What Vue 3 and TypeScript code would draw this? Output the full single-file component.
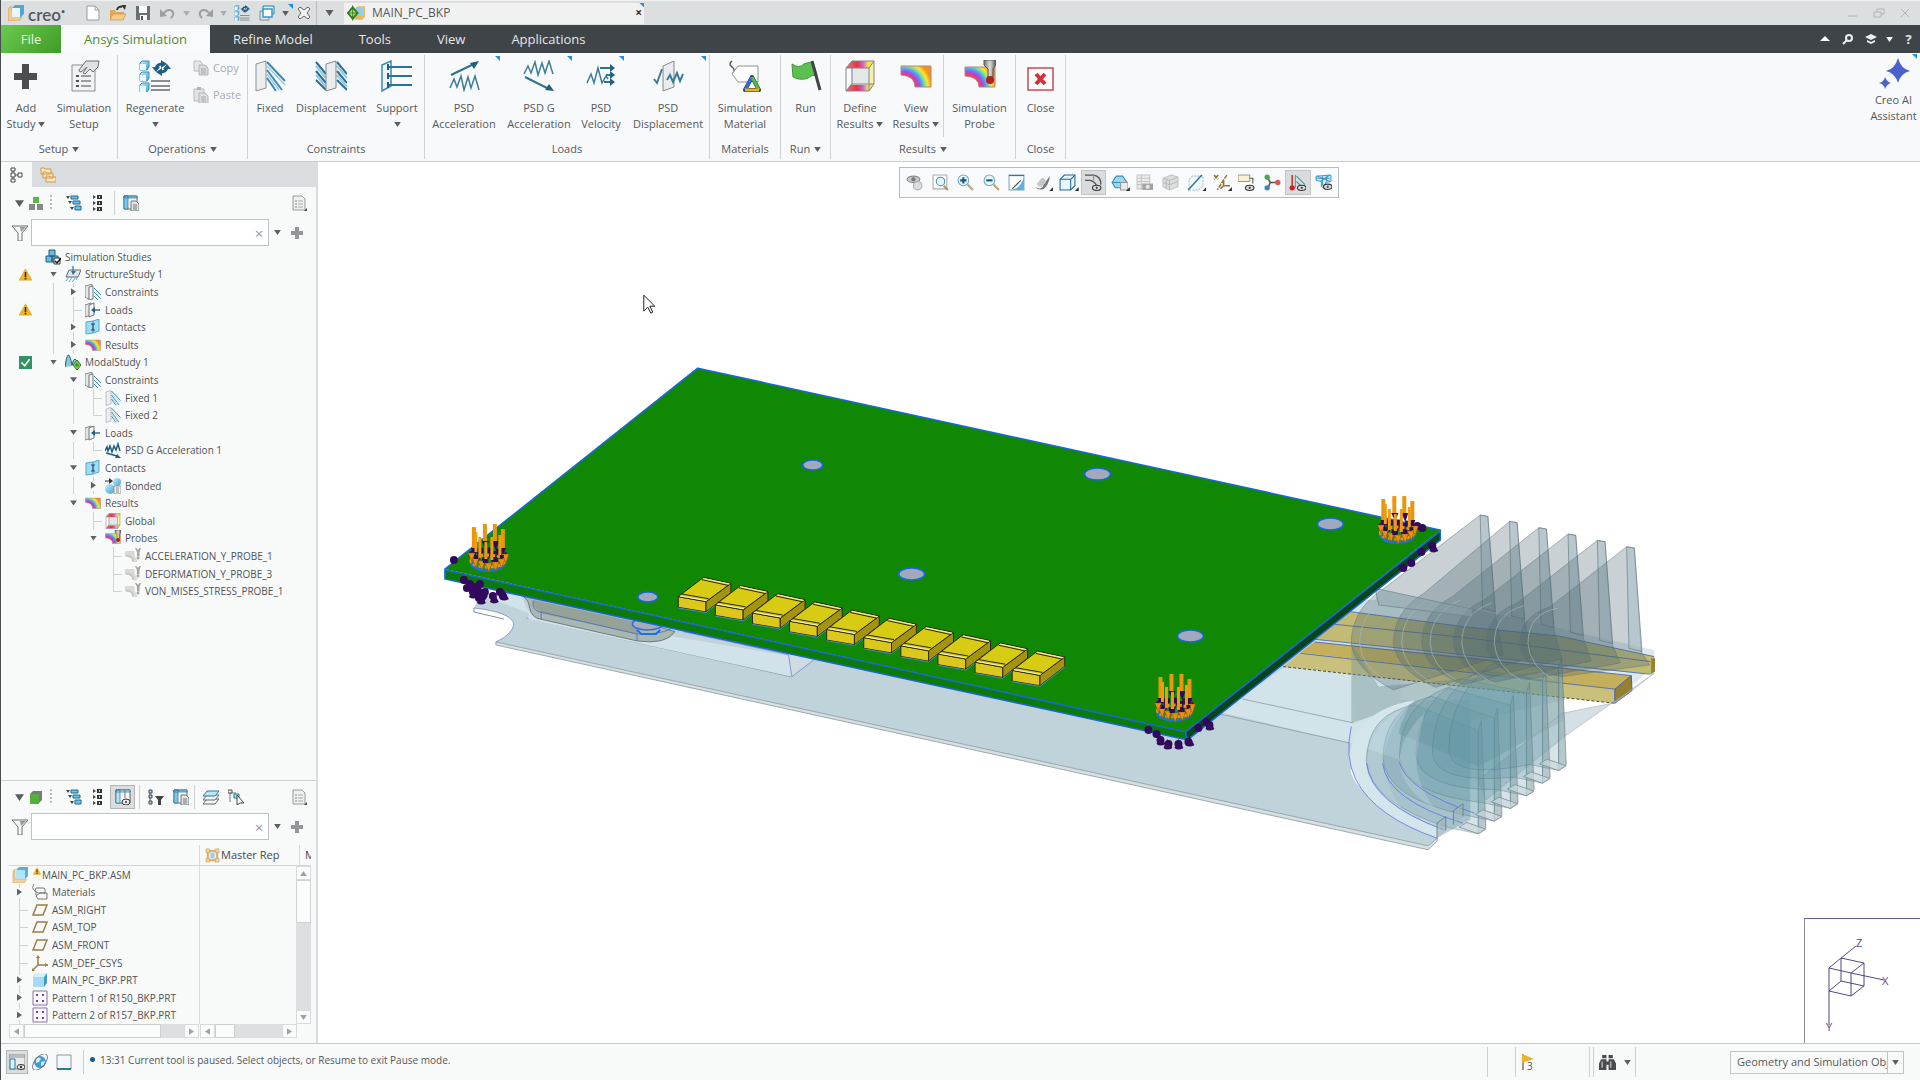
<script setup lang="ts">
import { ref } from 'vue'

interface RibbonItem {
  icon: string
  lines: string[]
  width: number
  caret?: boolean
  corner?: boolean
  divider?: boolean
}
interface RibbonGroup {
  label: string
  caret?: boolean
  items: RibbonItem[]
  clipboard?: boolean
}
interface TreeRow {
  label: string
  icon: string
  guides: string
  status?: string
}

const tabs = ['Refine Model', 'Tools', 'View', 'Applications']

const groups: RibbonGroup[] = [
  {
    label: 'Setup', caret: true,
    items: [
      { icon: 'plus', lines: ['Add', 'Study'], width: 50, caret: true },
      { icon: 'setup', lines: ['Simulation', 'Setup'], width: 66 },
    ],
  },
  {
    label: 'Operations', caret: true, clipboard: true,
    items: [{ icon: 'regen', lines: ['Regenerate', ''], width: 74, caret: true }],
  },
  {
    label: 'Constraints',
    items: [
      { icon: 'fixed', lines: ['Fixed'], width: 44 },
      { icon: 'disp', lines: ['Displacement'], width: 78 },
      { icon: 'support', lines: ['Support', ''], width: 54, caret: true },
    ],
  },
  {
    label: 'Loads',
    items: [
      { icon: 'psda', lines: ['PSD', 'Acceleration'], width: 78, corner: true },
      { icon: 'psdg', lines: ['PSD G', 'Acceleration'], width: 72, corner: true },
      { icon: 'psdv', lines: ['PSD', 'Velocity'], width: 52, corner: true },
      { icon: 'psdd', lines: ['PSD', 'Displacement'], width: 82, corner: true },
    ],
  },
  { label: 'Materials', items: [{ icon: 'material', lines: ['Simulation', 'Material'], width: 70 }] },
  { label: 'Run', caret: true, items: [{ icon: 'run', lines: ['Run'], width: 49 }] },
  {
    label: 'Results', caret: true,
    items: [
      { icon: 'define', lines: ['Define', 'Results'], width: 58, caret: true },
      { icon: 'view', lines: ['View', 'Results'], width: 54, caret: true },
      { icon: 'probe', lines: ['Simulation', 'Probe'], width: 72, divider: true },
    ],
  },
  { label: 'Close', items: [{ icon: 'close', lines: ['Close'], width: 49 }] },
]

// Guide characters, one per level: | line, T tee, L corner, v expanded, > collapsed
const studies: TreeRow[] = [
  { label: 'Simulation Studies', icon: 'studies', guides: '' },
  { label: 'StructureStudy 1', icon: 'structure', guides: 'v', status: 'warn' },
  { label: 'Constraints', icon: 'constraints', guides: '|>' },
  { label: 'Loads', icon: 'loads', guides: '|T', status: 'warn' },
  { label: 'Contacts', icon: 'contacts', guides: '|>' },
  { label: 'Results', icon: 'view', guides: '|>' },
  { label: 'ModalStudy 1', icon: 'modal', guides: 'v', status: 'ok' },
  { label: 'Constraints', icon: 'constraints', guides: ' v' },
  { label: 'Fixed 1', icon: 'fixed', guides: ' |T' },
  { label: 'Fixed 2', icon: 'fixed', guides: ' |L' },
  { label: 'Loads', icon: 'loads', guides: ' v' },
  { label: 'PSD G Acceleration 1', icon: 'psdg', guides: ' |L' },
  { label: 'Contacts', icon: 'contacts', guides: ' v' },
  { label: 'Bonded', icon: 'bonded', guides: ' |>' },
  { label: 'Results', icon: 'view', guides: ' v' },
  { label: 'Global', icon: 'define', guides: '  T' },
  { label: 'Probes', icon: 'probe', guides: '  v' },
  { label: 'ACCELERATION_Y_PROBE_1', icon: 'probe-off', guides: '   T' },
  { label: 'DEFORMATION_Y_PROBE_3', icon: 'probe-off', guides: '   T' },
  { label: 'VON_MISES_STRESS_PROBE_1', icon: 'probe-off', guides: '   L' },
]

const parts: TreeRow[] = [
  { label: 'MAIN_PC_BKP.ASM', icon: 'asm', guides: '', status: 'warn' },
  { label: 'Materials', icon: 'tags', guides: '>' },
  { label: 'ASM_RIGHT', icon: 'plane', guides: 'T' },
  { label: 'ASM_TOP', icon: 'plane', guides: 'T' },
  { label: 'ASM_FRONT', icon: 'plane', guides: 'T' },
  { label: 'ASM_DEF_CSYS', icon: 'csys', guides: 'T' },
  { label: 'MAIN_PC_BKP.PRT', icon: 'part', guides: '>' },
  { label: 'Pattern 1 of R150_BKP.PRT', icon: 'pattern', guides: '>' },
  { label: 'Pattern 2 of R157_BKP.PRT', icon: 'pattern', guides: '>' },
]

const guideClass: Record<string, string> = {
  '|': 'line', T: 'tee', L: 'elbow', v: 'open', '>': 'shut', ' ': 'none',
}

const viewTools = [
  { icon: 'v-pause', name: 'Resume display' },
  { icon: 'v-refit', name: 'Refit' },
  { icon: 'v-zoomin', name: 'Zoom in' },
  { icon: 'v-zoomout', name: 'Zoom out' },
  { icon: 'v-repaint', name: 'Repaint' },
  { icon: 'v-render', name: 'Rendering', more: true },
  { icon: 'v-style', name: 'Display style', more: true },
  { icon: 'v-edges', name: 'Edges', on: true },
  { icon: 'v-saved', name: 'Saved orientations', more: true },
  { icon: 'v-manager', name: 'View manager' },
  { icon: 'v-persp', name: 'Perspective' },
  { icon: 'v-section', name: 'Sections', more: true },
  { icon: 'v-datum', name: 'Datum display', more: true },
  { icon: 'v-notes', name: 'Annotation display' },
  { icon: 'v-spin', name: 'Spin center' },
  { icon: 'v-sim', name: 'Simulation display', on: true },
  { icon: 'v-mesh', name: 'Mesh display' },
]

const studyFilter = ref('')
const partFilter = ref('')
const selection = ref('Geometry and Simulation Objects')

const chips = Array.from({ length: 10 }, (_, i) => `translate(${i * 88.2} ${i * 24.6})`)
const holes = [
  [812, 465, 10, 5], [1097, 474, 13, 6], [911, 574, 13, 6],
  [647, 597, 10, 5], [1330, 524, 13, 6], [1190, 636, 13, 6],
]
const loads = [[487, 570], [1397, 542], [1174, 720]]
const backBars = [[-14, -43, -21], [-3, -46, -28], [7, -46, -28], [15, -41, -20]]
const frontBars = [[-12, -38, -18], [-8, -33, -12], [-2, -28, -8], [4, -33, -10], [12, -35, -12]]
const cones = [[-17, -9], [-13, -4], [-7, -1], [0, 1], [7, 0], [13, -3], [17, -8]]
const backCones = [[-14, -18], [-9, -15], [-3, -25], [0, -16], [7, -25], [6, -15], [14, -18], [11, -14]]
const anchors = [
  [463, 580], [469, 584], [479, 584], [466, 588], [472, 592], [484, 592], [478, 598], [492, 596], [502, 596], [499, 592],
  [1148, 730], [1156, 734], [1160, 740], [1168, 744], [1178, 744], [1188, 742], [1198, 728], [1206, 722], [1209, 725],
  [1432, 546], [1421, 552], [1411, 563], [1403, 568], [1417, 526], [1422, 528],
]
const bottomCones = [[472, 597], [480, 603], [493, 602], [503, 599], [1160, 744], [1167, 748], [1178, 748], [1189, 745], [1209, 729], [1433, 551]]

const apexes = [708, 818, 892, 975, 1060, 1148]
const upperFins = apexes.map((a, k) => {
  const x = 1045 + k * 76.6
  const y = 105 + k * 19
  const floor = 395 + k * 24
  return {
    face: `M${x} ${y} L${a + 80} ${330 + k * 10} Q${a} ${390 + k * 4} ${a} 490 Q${a + 8} 570 ${a + 110} ${630 - k * 8} L${x + 60} ${floor + 130 - k * 18} L${x + 38} ${floor} L${x + 20} ${y + 4} Z`,
    edge: `M${x} ${y} l20 4 l20 ${floor - y - 4} l-34 -10 Z`,
    rim: `M${a + 22} 490 Q${a + 22} 400 ${a + 100} ${345 + k * 8} M${a + 22} 490 Q${a + 26} 560 ${a + 90} 600`,
  }
})
const lowerFins = Array.from({ length: 6 }, (_, k) => {
  const x = 1040 + k * 42
  const y = 1062 - k * 38
  const a = 748 + k * 43
  return {
    face: `M${x} ${752 - k * 38} L${x - 165} ${675 - k * 26} Q${a} ${700 - k * 12} ${a} ${845 - k * 6} Q${a + 10} ${970 - k * 14} ${x - 75} ${y - 18} L${x} ${y} Z`,
    edge: `M${x} ${y} V${752 - k * 38} l8 -30 l12 ${322} Z`,
    foot: `M${x} ${y} l20 -14 l-50 -20 l-20 14 Z`,
  }
})
</script>

<template>
  <svg class="sprite" aria-hidden="true">
    <defs>
      <linearGradient id="g-rain"><stop offset="0" stop-color="#3a6ee8" /><stop offset=".2" stop-color="#e0409a" /><stop offset=".45" stop-color="#a83af0" /><stop offset=".6" stop-color="#30b4f0" /><stop offset=".8" stop-color="#f0e820" /><stop offset="1" stop-color="#f08020" /></linearGradient>
      <linearGradient id="g-hot"><stop offset="0" stop-color="#f46a80" /><stop offset=".4" stop-color="#e8343c" /><stop offset=".6" stop-color="#d060c8" /><stop offset=".8" stop-color="#f0e850" /><stop offset="1" stop-color="#f4e020" /></linearGradient>
      <radialGradient id="g-arc" gradientUnits="userSpaceOnUse" cx="3" cy="28" r="29"><stop offset=".34" stop-color="#f45a60" /><stop offset=".46" stop-color="#f03a7a" /><stop offset=".56" stop-color="#a84ae0" /><stop offset=".66" stop-color="#50a0f4" /><stop offset=".76" stop-color="#80e0a0" /><stop offset=".86" stop-color="#f8e820" /><stop offset="1" stop-color="#f49020" /></radialGradient>
      <linearGradient id="g-blue" x2="1" y2="1"><stop offset="0" stop-color="#c8ecfb" /><stop offset="1" stop-color="#3ba4d4" /></linearGradient>
      <linearGradient id="g-steel" x2="1"><stop offset="0" stop-color="#777" /><stop offset=".5" stop-color="#ddd" /><stop offset="1" stop-color="#555" /></linearGradient>
    </defs>

    <symbol id="caret" viewBox="0 0 8 6"><path d="M0 0h8L4 6z" fill="currentColor" /></symbol>
    <symbol id="plus" viewBox="0 0 32 32"><path d="M12 4h7v9h8v7h-8v9h-7v-9H4v-7h8z" fill="#4c4e50" /></symbol>
    <symbol id="setup" viewBox="0 0 32 32"><path d="M4 5h23v26H4z" fill="#f1f2f2" stroke="#8b8f91" /><path d="M11 10L18 1l13 0-1 6-5 5-3-3-5 5-2-1 4-6-6 5-2-1z" fill="#dfe1e2" stroke="#6c7072" /><path d="M8 16h3M8 21h3M8 26h3" stroke="#555" stroke-width="2" /><path d="M13 16h10M13 21h10M13 26h10" stroke="#9a9ea0" stroke-width="2" /></symbol>
    <symbol id="regen" viewBox="0 0 32 32"><g fill="url(#g-blue)" stroke="#3c8fb4"><path d="M1 3l2-2h7v6l-2 3H1z" /><path d="M1 14l2-2h7v6l-2 3H1z" /><path d="M1 25l2-2h7v6l-2 3H1z" /></g><path d="M1 4h6v6H1zM1 15h6v6H1zM1 26h6v6H1z" fill="#eaf7fc" /><path d="M17 9q1-5 6-5M28 7q-1 5-6 5" fill="none" stroke="#1f5f85" stroke-width="3" /><path d="M22 0l6 4-6 4zM23 8v8l-6-4zM13 7h8l-4 5zM24 9h8l-4-5z" fill="#1f5f85" /><path d="M12 21h19M12 26h19M12 30h19" stroke="#8a8e90" stroke-width="2" /></symbol>
    <symbol id="fixed" viewBox="0 0 32 32"><path d="M2 4l10-3v27l-10 3z" fill="#eceeef" stroke="#8b9194" /><path d="M13 2l18 19M13 10l15 20M13 18l9 13" stroke="#3d89b3" stroke-width="2" /><path d="M13 6l18 19M13 14l12 16" stroke="#93cbe4" stroke-width="1.500" /></symbol>
    <symbol id="disp" viewBox="0 0 32 32"><path d="M1 2l10 12M1 11l10 12M1 20l10 10M22 2l10 12M22 11l10 12M22 20l10 10" stroke="#2d6e93" stroke-width="2" /><path d="M1 6l10 12M1 15l10 12M22 6l10 12M22 15l10 12" stroke="#8ec9e4" stroke-width="2" /><path d="M11 4l10-3v27l-10 3z" fill="#e9ebec" stroke="#85898c" /></symbol>
    <symbol id="support" viewBox="0 0 32 32"><path d="M1 5l9-4v25l-9 5z" fill="#edf4f8" stroke="#3a8ab2" stroke-width="1.500" /><path d="M8 7h23M8 16h23M8 25h23" stroke="#2a7099" stroke-width="2" /><path d="M7 4v6M7 13v6M7 22v6" stroke="#1f5f85" stroke-width="2" /></symbol>
    <symbol id="psda" viewBox="0 0 32 32"><path d="M3 15L28 3" stroke="#2f7391" stroke-width="2" /><path d="M31 1l-9 2 4 6z" fill="#245f7e" /><path d="M2 28l4-9 3 8 4-11 3 14 4-13 3 11 4-12 4 14" fill="none" stroke="#3b7d99" stroke-width="1.500" /></symbol>
    <symbol id="psdg" viewBox="0 0 32 32"><path d="M1 14l4-8 3 7 4-11 3 13 4-12 3 10 4-12 4 13" fill="none" stroke="#3b7d99" stroke-width="1.500" /><path d="M2 17l24 12" stroke="#2f7391" stroke-width="2" /><path d="M31 31l-9-1 4-6z" fill="#245f7e" /></symbol>
    <symbol id="psdg-s" viewBox="0 0 16 16"><path d="M0 9l2-4 1 4 2-5 2 6 2-6 2 4 2-6 2 7" fill="none" stroke="#1f5f80" stroke-width="1.500" /><path d="M1 11l11 3" stroke="#1f5f80" stroke-width="1.500" /><path d="M16 16l-6 0 2-4z" fill="#1f5f80" /></symbol>
    <symbol id="psdv" viewBox="0 0 32 32"><path d="M2 23l4-9 3 9 4-15 4 15 4-7 2 3" fill="none" stroke="#3b7d99" stroke-width="1.500" /><path d="M15 8h12M21 15h6M19 22h8" stroke="#2f7391" stroke-width="2" /><path d="M25 4l5 4-5 4zM25 11l5 4-5 4zM25 18l5 4-5 4z" fill="#245f7e" /></symbol>
    <symbol id="psdd" viewBox="0 0 32 32"><path d="M11 6l11-5v26l-11 4z" fill="#e9ebec" stroke="#85898c" /><path d="M2 19l3 4 5-14M15 20l3-5 3 7 4-9 3 8 3-7" fill="none" stroke="#3b7d99" stroke-width="2" /></symbol>
    <symbol id="material" viewBox="0 0 32 32"><path d="M3 1q-4 3 0 6t1 6" fill="none" stroke="#555" stroke-width="1.500" /><path d="M9 6h20v16H9l-6-8z" fill="#fff" stroke="#8b8f91" /><path d="M23 17l7 13H16z" fill="#fff" stroke="#333" stroke-width="4" stroke-linejoin="round" /><path d="M23 17l-7 13" stroke="#2f6fe0" stroke-width="3" /><path d="M23 17l7 13" stroke="#4cc040" stroke-width="3" /><path d="M16 30h14" stroke="#e8b020" stroke-width="3" /></symbol>
    <symbol id="run" viewBox="0 0 32 32"><path d="M2 4q7 5 12 0 5-2 9-2l4 13q-6 0-9 3-7 3-15-1z" fill="#5cc050" stroke="#3a9a34" /><path d="M22 1l8 29" stroke="#444" stroke-width="3" /></symbol>
    <symbol id="define" viewBox="0 0 32 32"><path d="M2 8L8 1h22l-5 7zM2 31l5-7h23l-5 7z" fill="url(#g-hot)" /><path d="M7 8h18v17H7z" fill="#e4e7e8" /><path d="M25 8l5-7v23l-5 7z" fill="#f0e860" opacity=".5" /><path d="M2 8h23v23H2zM2 8L8 1h22l-5 7M30 1v23l-5 7M8 1v23h22M2 31l6-7" fill="none" stroke="#8a8288" /></symbol>
    <symbol id="view" viewBox="0 0 32 32"><path d="M1 6h30v21H15q0-11-14-12z" fill="url(#g-arc)" stroke="#b08878" /></symbol>
    <symbol id="probe" viewBox="0 0 32 32"><path d="M1 7h30v20H15q0-10-14-11z" fill="url(#g-arc)" stroke="#b08878" /><path d="M20 0h12v5l-3 4v8h-5V9l-4-4z" fill="url(#g-steel)" stroke="#555" /><circle cx="26" cy="20" r="4" fill="#b02020" /></symbol>
    <symbol id="probe-off" viewBox="0 0 32 32"><path d="M1 7h17v8l6 12H15q0-10-14-11z" fill="#dcdad6" stroke="#ccc9c5" /><path d="M16 27q1-11-14-12" fill="none" stroke="#c6c3bf" stroke-width="3" /><path d="M20 0h3l3 4 3-4h3l-3 8v9h-5V8z" fill="#a4a5a3" /><circle cx="26" cy="20" r="3" fill="#aaa8a4" /></symbol>
    <symbol id="close" viewBox="0 0 32 32"><path d="M3 8h25v22H3z" fill="#fff" stroke="#d0474c" stroke-width="1.500" /><path d="M11 14l9 10M20 14l-9 10" stroke="#d13438" stroke-width="4" /></symbol>
    <symbol id="spark" viewBox="0 0 32 32"><path d="M20 1q3 11 12 13-9 2-12 12-3-10-12-12Q17 12 20 1zM7 20q2 5 6 6-4 1-6 6-1-5-6-6 5-1 6-6z" fill="#4b62cc" /></symbol>
    <symbol id="copy" viewBox="0 0 16 16"><path d="M1 1h6l2 2v8H1z" fill="#e6e7e7" stroke="#b8babb" /><path d="M6 5h6l3 3v7H6z" fill="#d9dada" stroke="#b3b5b6" /><path d="M8 9h5M8 11h5M8 13h5" stroke="#aaa" /></symbol>
    <symbol id="paste" viewBox="0 0 16 16"><path d="M1 2h10v12H1z" fill="#e2e3e3" stroke="#b8babb" /><path d="M4 0h4v3H4z" fill="#b3b5b6" /><path d="M6 6h6l3 3v7H6z" fill="#dedfdf" stroke="#b3b5b6" /><path d="M8 10h5M8 12h5M8 14h5" stroke="#aaa" /></symbol>

    <symbol id="logo" viewBox="0 0 16 16"><path d="M0 4l3-3 2 10 9 1-3 4H0z" fill="#f0c98c" stroke="#c99a58" stroke-width=".600" /><path d="M4 3l3-3h9v9l-3 3H4z" fill="#4ea9d2" /><path d="M4 3h8v9H4z" fill="#eaf6fc" /></symbol>
    <symbol id="newdoc" viewBox="0 0 16 16"><path d="M2 1h8l4 4v10H2z" fill="#fff" stroke="#9a9d9f" /><path d="M10 1v4h4" fill="none" stroke="#9a9d9f" /></symbol>
    <symbol id="open" viewBox="0 0 16 16"><path d="M0 5h5l1 2h8v8H0z" fill="#e2a75b" /><path d="M3 9h13l-3 6H0z" fill="#f4cc8c" stroke="#c98a3e" stroke-width=".600" /><path d="M7 5q1-4 5-3" fill="none" stroke="#333" stroke-width="2" /><path d="M11 0h5l-1 5z" fill="#333" /></symbol>
    <symbol id="save" viewBox="0 0 16 16"><path d="M1 1h14v14H1z" fill="#6b6f73" /><path d="M4 1h8v7H4zM5 10h7v5H5z" fill="#fff" /><path d="M6 11h2v4H6z" fill="#555" /></symbol>
    <symbol id="undo" viewBox="0 0 16 16"><path d="M3 9q5-6 9-3 3 3-1 7" fill="none" stroke="#9c9fa1" stroke-width="2" /><path d="M0 4v8l7-1z" fill="#9c9fa1" /></symbol>
    <symbol id="windows" viewBox="0 0 16 16"><path d="M4 1h11v8H4z" fill="#e8f4fa" stroke="#2d7ca4" /><path d="M1 6h9v9H1z" fill="#dfe3e4" stroke="#888" /><path d="M4 4h9v8H4z" fill="#fff" stroke="#2d9ad0" stroke-width="1.500" /></symbol>
    <symbol id="xbox" viewBox="0 0 16 16"><path d="M2 4l2-2 4 3 4-3 2 2-3 4 3 4-2 2-4-3-4 3-2-2 3-4z" fill="#f2f2f2" stroke="#666" /></symbol>
    <symbol id="assembly" viewBox="0 0 20 16"><path d="M8 4l3-3h8v11l-3 3H8z" fill="#e8b860" /><path d="M10 2h8v9h-8z" fill="#8fd0ee" /><path d="M6 2l5 6-5 6-5-6z" fill="#b8ec88" stroke="#2f7d1c" stroke-width="2" /><path d="M6 0v16M0 8h12" stroke="#2f7d1c" /></symbol>

    <symbol id="studies" viewBox="0 0 16 16"><g fill="#66bce0" stroke="#235f7e" stroke-width="1"><path d="M4 1h6v6H4zM1 7h6v6H1zM7 7h6v6H7z" /></g><path d="M9 9h6v6H9z" fill="#fff" stroke="#333" /><path d="M10 12l2 2 4-5" fill="none" stroke="#111" stroke-width="1.500" /></symbol>
    <symbol id="structure" viewBox="0 0 16 16"><path d="M4 4h12l-3 7H1z" fill="#e3e6e8" stroke="#666" /><path d="M8 0v6" stroke="#3b8fbb" stroke-width="1.500" /><path d="M6 5h5L8 9z" fill="#2c739b" /><path d="M4 11l-3 4M7 11l-3 5M11 11l-4 5M14 9l-3 5" stroke="#58a6cc" /></symbol>
    <symbol id="constraints" viewBox="0 0 16 16"><path d="M0 2l7-2v13l-4 2-3-2z" fill="#e4e6e7" stroke="#888" /><path d="M4 3l4-1v13l-4 1z" fill="#f2f3f3" stroke="#777" /><path d="M9 4l7 7M9 8l7 7M9 12l4 4" stroke="#3d89b3" /></symbol>
    <symbol id="loads" viewBox="0 0 16 16"><path d="M0 3l6-2v12l-6 2z" fill="#e4e6e7" stroke="#888" /><path d="M4 3l5-2v12l-5 2z" fill="#f2f3f3" stroke="#777" /><path d="M8 8h7" stroke="#2f7391" stroke-width="1.500" /><path d="M6 8l4-3v6z" fill="#245f7e" /></symbol>
    <symbol id="contacts" viewBox="0 0 16 16"><path d="M1 3l7-1v12l-7 1zM8 2l6-2v12l-6 2z" fill="#9fdcf4" stroke="#5aa8cc" /><path d="M6 5h4M6 11h4M8 5v6" stroke="#1f4f6f" /></symbol>
    <symbol id="modal" viewBox="0 0 16 16"><path d="M0 13Q3-10 7 11 8 5 10 5q2 1 3 6" fill="#8cc4de" stroke="#245f7e" /><path d="M12 6l4 5-4 5-4-5z" fill="#7fd04c" stroke="#2f7d1c" /><path d="M12 9v4M10 11h4" stroke="#2f7d1c" /></symbol>
    <symbol id="bonded" viewBox="0 0 16 16"><circle cx="12" cy="4" r="4" fill="url(#g-blue)" /><circle cx="5" cy="11" r="5" fill="url(#g-blue)" /><path d="M0 3h5" stroke="#333" /><path d="M4 0l4 3-4 3z" fill="#333" /><path d="M9 8h7v8H9z" fill="#f3f3f3" stroke="#999" /><path d="M11 10h3M11 12h3M11 14h3" stroke="#888" /></symbol>
    <symbol id="warn" viewBox="0 0 16 16"><path d="M8 1l8 14H0z" fill="#f0b62a" stroke="#c99420" stroke-width=".500" /><path d="M7 5h2v6H7zM7 12h2v2H7z" fill="#3a2c08" /></symbol>
    <symbol id="ok" viewBox="0 0 16 16"><path d="M0 0h16v16H0z" fill="#2f9461" /><path d="M3 8l4 4 6-8" fill="none" stroke="#fff" stroke-width="2" /></symbol>
    <symbol id="asm" viewBox="0 0 16 16"><path d="M1 4l2-2v10h11v1l-2 3H1z" fill="#f2d19c" stroke="#caa060" stroke-width=".600" /><path d="M4 3l3-3h9v9l-3 3H4z" fill="#4fb0dc" /><path d="M4 3h9v9H4z" fill="#b4e2f6" /></symbol>
    <symbol id="tags" viewBox="0 0 16 16"><path d="M2 0Q-1 4 2 6t2 5" fill="none" stroke="#777" /><path d="M4 4h8l1 1v4H6L3 7zM8 9h7v6H6l-2-3z" fill="#fafafa" stroke="#777" /></symbol>
    <symbol id="plane" viewBox="0 0 16 16"><path d="M5 3h10l-4 10H1z" fill="none" stroke="#9a7e45" stroke-width="1.500" /></symbol>
    <symbol id="csys" viewBox="0 0 16 16"><path d="M6 1v9l-5 5M6 10h10" fill="none" stroke="#9a7e45" stroke-width="1.500" /><path d="M4 3l2-3 2 3zM0 13v3h3zM13 8l3 2-3 2z" fill="#9a7e45" /></symbol>
    <symbol id="part" viewBox="0 0 16 16"><path d="M1 5l3-4h11v10l-3 4H1z" fill="#3f9cc8" /><path d="M1 5h11v10H1z" fill="#a5daf2" /><path d="M1 5l3-4h11l-3 4z" fill="#d6f1fc" /></symbol>
    <symbol id="pattern" viewBox="0 0 16 16"><path d="M1 1h14v14H1z" fill="#fdfbff" stroke="#8a70a8" /><path d="M4 4h2v2H4zM10 4h2v2h-2zM4 10h2v2H4zM10 10h2v2h-2z" fill="#6b4a96" /></symbol>

    <symbol id="modeltree" viewBox="0 0 16 16"><path d="M4 3v10M4 8h6" stroke="#555" /><path d="M2 1h4v3H2zM2 6h4v4H2zM2 12h4v3H2zM9 6h4v4H9z" fill="#fff" stroke="#444" /></symbol>
    <symbol id="folders" viewBox="0 0 16 16"><g fill="#fbe6bf" stroke="#cf9a4c"><path d="M1 1h3l1 1h6v5H1zM3 5h3l1 1h6v5H3zM6 9h3l1 1h6v5H6z" /></g></symbol>
    <symbol id="blocks" viewBox="0 0 16 16"><path d="M5 2h6v6H5z" fill="#5cb544" /><path d="M1 9h6v6H1zM9 9h6v6H9z" fill="#85898b" /></symbol>
    <symbol id="cube" viewBox="0 0 16 16"><path d="M2 5l3-3h9v9l-3 3z" fill="#777b7d" /><path d="M2 5h9v10H2z" fill="#55ae3e" /></symbol>
    <symbol id="expand" viewBox="0 0 16 16"><g fill="#6cc3e8" stroke="#20688c"><path d="M5 1h7v3H5zM7 6h7v3H7zM9 11h6v4H9z" /></g><path d="M0 1h4L2 4zM2 6h4L4 9zM4 12h4l-2 3z" fill="#444" /></symbol>
    <symbol id="collapse" viewBox="0 0 16 16"><path d="M7 0h5v4H7zM7 6h5v4H7zM7 12h5v4H7z" fill="#333" /><path d="M9 1h1v2H9zM9 7h1v2H9zM9 13h1v2H9z" fill="#ddd" /><path d="M3 0l3 2-3 2zM3 6l3 2-3 2zM3 12l3 2-3 2z" fill="#444" /></symbol>
    <symbol id="columns" viewBox="0 0 16 16"><path d="M1 1h13v13H1z" fill="#f4f6f7" stroke="#666" /><path d="M1 1h4v13H1zM1 1h13v2H1z" fill="#7cc6e8" stroke="#2b7196" stroke-width=".700" /><path d="M8 6h5l3 3v7H8z" fill="#e2e3e4" stroke="#777" /><path d="M10 10h4M10 12h4M10 14h4" stroke="#777" /></symbol>
    <symbol id="eyecols" viewBox="0 0 16 16"><path d="M1 1h14v13H1z" fill="#fafafa" stroke="#666" /><path d="M1 1h4v13H1zM1 1h14v2H1z" fill="#b8e2f4" stroke="#2b7196" stroke-width=".700" /><path d="M10 1v8" stroke="#777" /><ellipse cx="11" cy="13" rx="4" ry="3" fill="#eee" stroke="#333" /><circle cx="11" cy="13" r="1" fill="#333" /></symbol>
    <symbol id="navigator" viewBox="0 0 16 16"><path d="M0 1h16v14H0z" fill="#e9eaea" stroke="#8a8d8f" /><path d="M0 3h16" stroke="#8a8d8f" /><path d="M1 5h5v10H1z" fill="#d8f0fa" stroke="#2b7a9e" /><ellipse cx="12" cy="13" rx="4" ry="2.500" fill="#eee" stroke="#333" /><circle cx="12" cy="13" r="1.200" fill="#333" /></symbol>
    <symbol id="treefilter" viewBox="0 0 16 16"><path d="M2 2v12" stroke="#555" /><path d="M1 1h3v3H1zM1 6h3v3H1zM1 12h3v3H1z" fill="#a8dcf2" stroke="#444" /><path d="M7 7h9l-3 4v5h-3v-5z" fill="#444" /></symbol>
    <symbol id="layers" viewBox="0 0 16 16"><g fill="#f3f5f6" stroke="#666"><path d="M4 10h12l-4 5H0z" /><path d="M4 6h12l-4 5H0z" /><path d="M4 2h12l-4 5H0z" fill="#bfe6f7" stroke="#2b7a9e" /></g></symbol>
    <symbol id="pick" viewBox="0 0 16 16"><path d="M2 3v10M2 4h6" stroke="#777" /><path d="M0 1h4v3H0z" fill="#eee" stroke="#555" /><path d="M6 5h5v4H6z" fill="#a8dcf2" stroke="#2b7a9e" /><path d="M9 6l7 8-4 0-3 2z" fill="#fff" stroke="#444" /></symbol>
    <symbol id="doclist" viewBox="0 0 16 16"><path d="M2 1h9l3 3v11H2z" fill="#eeefef" stroke="#999" /><path d="M4 6h2M4 9h2M4 12h2" stroke="#888" /><path d="M7 6h5M7 9h5M7 12h5" stroke="#aaa" /><path d="M16 13v3h-3z" fill="#444" /></symbol>
    <symbol id="funnel" viewBox="0 0 16 16"><path d="M0 1h16l-6 7v8H6V8z" fill="#f6f6f6" stroke="#6d7072" /><path d="M8 2h6l-5 5z" fill="#999" /></symbol>
    <symbol id="add" viewBox="0 0 16 16"><path d="M6 2h4v4h4v4h-4v4H6v-4H2V6h4z" fill="#939799" /></symbol>
    <symbol id="rep" viewBox="0 0 16 16"><path d="M3 3h10v10H3z" fill="#dff0f8" stroke="#d9a95c" stroke-width="2" /><path d="M1 1h4v4H1zM11 1h4v4h-4zM1 11h4v4H1zM11 11h4v4h-4z" fill="#f1d09c" stroke="#c99a4e" stroke-width=".600" /><path d="M6 5h4v6H6z" fill="#a7c8d4" /></symbol>
    <symbol id="globe" viewBox="0 0 16 16"><circle cx="8" cy="8" r="6" fill="#3f9cd4" /><path d="M4 5q3-3 5 0l-2 3-3 1zM9 8l4-1-1 4-3 1z" fill="#d6eefa" /><ellipse cx="8" cy="8" rx="10" ry="5" transform="rotate(-50 8 8)" fill="none" stroke="#667" stroke-width=".800" /></symbol>
    <symbol id="pane" viewBox="0 0 16 16"><path d="M1 1h14v14H1z" fill="#f2f8fc" stroke="#8799a4" /><path d="M1 15h14" stroke="#2d7aa0" stroke-width="2" /></symbol>
    <symbol id="flag" viewBox="0 0 12 16"><path d="M0 0v16h2V0z" fill="#999" /><path d="M0 0l12 5-12 4z" fill="#eab52c" /></symbol>
    <symbol id="binoc" viewBox="0 0 16 16"><path d="M2 5h5v10H0V9zM9 5h5l2 4v6H9zM6 7h4v3H6zM3 1h4v3H3zM9 1h4v3H9z" fill="#484c4e" /><path d="M3 7v6M11 7v6" stroke="#aaa" stroke-width="1.500" /></symbol>

    <symbol id="v-pause" viewBox="0 0 16 16"><ellipse cx="7" cy="5" rx="6" ry="3" fill="#c9cacb" stroke="#888" /><circle cx="7" cy="5" r="2" fill="#777" /><circle cx="11" cy="11" r="4" fill="#ddd" stroke="#aaa" /></symbol>
    <symbol id="v-refit" viewBox="0 0 16 16"><path d="M1 1h13v13H1z" fill="#fff" stroke="#aaa" /><circle cx="8" cy="7" r="4" fill="#e4f4fb" stroke="#4a8cac" /><path d="M11 11l4 4" stroke="#a89868" stroke-width="2" /></symbol>
    <symbol id="v-zoomin" viewBox="0 0 16 16"><path d="M10 10l5 5" stroke="#b8a878" stroke-width="2" /><circle cx="6" cy="6" r="5" fill="#e9f6fc" stroke="#6fa8c2" /><path d="M3 6h6M6 3v6" stroke="#1c5b80" stroke-width="2" /></symbol>
    <symbol id="v-zoomout" viewBox="0 0 16 16"><path d="M10 10l5 5" stroke="#b8a878" stroke-width="2" /><circle cx="6" cy="6" r="5" fill="#e9f6fc" stroke="#6fa8c2" /><path d="M3 6h6" stroke="#1c5b80" stroke-width="2" /></symbol>
    <symbol id="v-repaint" viewBox="0 0 16 16"><path d="M1 1h14v14H1z" fill="#fff" stroke="#7ea8bc" /><path d="M15 3v12H4q8-2 11-12z" fill="#58b2dc" /><path d="M12 6l-8 8" stroke="#455" /><path d="M1 1h14v1H1z" fill="#2d6f94" /></symbol>
    <symbol id="v-render" viewBox="0 0 16 16"><path d="M1 12q6 4 8-2 4-6 6-8-1 8-6 12-5 2-8-2z" fill="#76797b" /><path d="M7 4q4-1 4 4l-4 4q-4 0-4-3z" fill="#c5c7c8" /></symbol>
    <symbol id="v-style" viewBox="0 0 16 16"><path d="M1 5l4-4h10v10l-4 4H1z" fill="#e8f5fb" stroke="#1f6a92" /><path d="M1 5h10v10M11 5l4-4" fill="none" stroke="#1f6a92" /></symbol>
    <symbol id="v-edges" viewBox="0 0 16 16"><path d="M0 1h8q7 1 7 9M0 6h5q4 1 6 5" fill="none" stroke="#555" stroke-width="1.200" /><path d="M8 1v5" stroke="#4ba5cf" /><ellipse cx="11" cy="13" rx="4" ry="2.500" fill="#ddd" stroke="#333" /><circle cx="11" cy="13" r="1" fill="#333" /></symbol>
    <symbol id="v-saved" viewBox="0 0 16 16"><path d="M5 2h6l4 6-4 5H4L1 8z" fill="#9ad6f0" stroke="#3a8eb4" /><path d="M1 8h14" stroke="#3a8eb4" /><path d="M9 8h7v7H9z" fill="#e9e9e9" stroke="#999" /></symbol>
    <symbol id="v-manager" viewBox="0 0 16 16"><path d="M1 1h12v13H1zM1 4h12M1 7h12M1 10h12M5 1v13" fill="#ececec" stroke="#c4c4c4" /><path d="M6 9h10v6H6z" fill="#a2a4a5" /><circle cx="11" cy="12" r="2" fill="#e5e5e5" /></symbol>
    <symbol id="v-persp" viewBox="0 0 16 16"><path d="M1 4l8-3 6 2v9l-8 3-6-3z" fill="#dcdddd" stroke="#c4c4c4" /><path d="M7 6v9M1 4l6 2 8-3M4 5v9M1 8l6 2 8-3" fill="none" stroke="#bbb" /></symbol>
    <symbol id="v-section" viewBox="0 0 16 16"><path d="M2 5l3-3h10v9l-4 4H2z" fill="#f3f8fa" stroke="#a9c4d0" stroke-dasharray="2 1" /><path d="M1 15L14 1" stroke="#2f7ba4" stroke-width="1.500" /></symbol>
    <symbol id="v-datum" viewBox="0 0 16 16"><path d="M1 1l4 4M5 1L1 5M13 1L4 15" stroke="#8d7a3c" stroke-width="1.500" stroke-dasharray="4 1" /><path d="M10 6v5l-3 3M10 11h6" fill="none" stroke="#8d7a3c" stroke-width="1.500" /></symbol>
    <symbol id="v-notes" viewBox="0 0 16 16"><path d="M0 1h11v6H0z" fill="#f8f2cc" stroke="#999" /><path d="M11 4h3v5" fill="none" stroke="#555" /><ellipse cx="11" cy="13" rx="4" ry="2.500" fill="#ddd" stroke="#333" /><circle cx="11" cy="13" r="1" fill="#333" /></symbol>
    <symbol id="v-spin" viewBox="0 0 16 16"><path d="M6 8L3 3M6 8h8M6 8l-3 6" stroke="#555" stroke-width="1.500" /><circle cx="3" cy="3" r="2.500" fill="#50a84c" /><circle cx="13" cy="8" r="2.500" fill="#d85858" /><circle cx="3" cy="13" r="2.500" fill="#3c86ae" /></symbol>
    <symbol id="v-sim" viewBox="0 0 16 16"><path d="M3 1v10" stroke="#c33" stroke-width="1.500" /><circle cx="3" cy="13" r="2.500" fill="#c22" /><path d="M6 1v12" stroke="#888" /><path d="M7 2l8 8M7 7l5 5" stroke="#4b8dab" /><ellipse cx="12" cy="13" rx="4" ry="2.500" fill="#ddd" stroke="#333" /><circle cx="12" cy="13" r="1" fill="#333" /></symbol>
    <symbol id="v-mesh" viewBox="0 0 16 16"><path d="M1 2l14-1v6l-5 1v6l-4-2V7L1 6z" fill="#cdeaf6" stroke="#2f8ab4" stroke-width=".800" /><path d="M2 2l12 5M5 7l9-6M7 2v9M11 1v6M1 4h13" stroke="#2f8ab4" stroke-width=".800" /><ellipse cx="12" cy="12" rx="4" ry="2.500" fill="#ddd" stroke="#333" /><circle cx="12" cy="12" r="1" fill="#333" /></symbol>
  </svg>

  <div class="app">
    <header class="titlebar">
      <svg class="logo"><use href="#logo" /></svg>
      <span class="brand">creo<i>•</i></span>
      <button class="qa w24" aria-label="New"><svg><use href="#newdoc" /></svg></button>
      <button class="qa w24" aria-label="Open"><svg><use href="#open" /></svg></button>
      <button class="qa w24" aria-label="Save"><svg><use href="#save" /></svg></button>
      <button class="qa w24" aria-label="Undo"><svg><use href="#undo" /></svg></button>
      <button class="qa w12 dim" aria-label="Undo list"><svg class="caret"><use href="#caret" /></svg></button>
      <button class="qa w24" aria-label="Redo"><svg class="flip"><use href="#undo" /></svg></button>
      <button class="qa w12 dim" aria-label="Redo list"><svg class="caret"><use href="#caret" /></svg></button>
      <button class="qa w24" aria-label="Regenerate"><svg><use href="#regen" /></svg></button>
      <button class="qa w24" aria-label="Windows"><svg><use href="#windows" /></svg></button>
      <button class="qa w12" aria-label="Window list"><svg class="caret"><use href="#caret" /></svg><i class="corner" /></button>
      <button class="qa w24" aria-label="Close window"><svg><use href="#xbox" /></svg></button>
      <button class="qa w24 more" aria-label="Customize toolbar"><svg class="caret"><use href="#caret" /></svg></button>
      <div class="doc">
        <svg><use href="#assembly" /></svg>
        <span>MAIN_PC_BKP</span>
        <button aria-label="Close tab">×</button>
        <i class="corner" />
      </div>
      <div class="wins">
        <button aria-label="Minimize"><svg viewBox="0 0 12 12"><path d="M1 9h9" /></svg></button>
        <button aria-label="Restore"><svg viewBox="0 0 12 12"><path d="M1 5h7v5H1zM4 5V2h7v5H8" /></svg></button>
        <button aria-label="Close"><svg viewBox="0 0 12 12"><path d="M2 2l8 8M10 2l-8 8" /></svg></button>
      </div>
    </header>

    <nav class="tabbar">
      <button class="file">File</button>
      <button class="active">Ansys Simulation</button>
      <button v-for="t in tabs" :key="t" class="tab">{{ t }}</button>
      <div class="tabtools">
        <button aria-label="Collapse ribbon"><svg viewBox="0 0 12 12"><path d="M1 8l5-5 5 5z" fill="#fff" /></svg></button>
        <button aria-label="Search"><svg viewBox="0 0 12 12"><circle cx="7" cy="5" r="3" fill="none" stroke="#eee" stroke-width="2" /><path d="M5 7l-4 4" stroke="#eee" stroke-width="2" /></svg></button>
        <button aria-label="Learning"><svg viewBox="0 0 12 12"><path d="M0 4l6-3 6 3-6 3zM2 7l4 2 4-2v2l-4 2-4-2z" fill="#eee" /></svg></button>
        <button class="narrow" aria-label="Learning list"><svg class="caret"><use href="#caret" /></svg></button>
        <button class="help" aria-label="Help">?</button>
      </div>
    </nav>

    <section class="ribbon">
      <div v-for="g in groups" :key="g.label" class="group">
        <div class="items">
          <button v-for="it in g.items" :key="it.lines.join()" class="item" :class="{ split: it.divider }" :style="{ width: it.width + 'px' }">
            <svg class="big"><use :href="'#' + it.icon" /></svg>
            <span v-for="(l, n) in it.lines" :key="n" class="ln">{{ l }}<svg v-if="it.caret && n === 1" class="caret"><use href="#caret" /></svg></span>
            <i v-if="it.corner" class="corner" />
          </button>
          <div v-if="g.clipboard" class="clip">
            <button><svg><use href="#copy" /></svg>Copy</button>
            <button><svg><use href="#paste" /></svg>Paste</button>
          </div>
        </div>
        <div class="glabel">{{ g.label }}<svg v-if="g.caret" class="caret"><use href="#caret" /></svg></div>
      </div>
      <button class="item ai">
        <svg class="big"><use href="#spark" /></svg>
        <span class="ln">Creo AI</span><span class="ln">Assistant</span>
        <i class="corner" />
      </button>
    </section>

    <main class="body">
      <aside class="panel">
        <div class="ptabs">
          <button class="on" aria-label="Model tree"><svg><use href="#modeltree" /></svg></button>
          <button aria-label="Folders"><svg><use href="#folders" /></svg></button>
        </div>

        <div class="upper">
          <div class="tools">
            <button class="t18" aria-label="Tree menu"><svg class="caret big-caret"><use href="#caret" /></svg></button>
            <button class="t16" aria-label="Studies"><svg><use href="#blocks" /></svg></button>
            <i class="dots" />
            <button class="t31" aria-label="Expand all"><svg><use href="#expand" /></svg></button>
            <button class="t17" aria-label="Collapse all"><svg><use href="#collapse" /></svg></button>
            <i class="sep wide" />
            <button class="t31" aria-label="Column settings"><svg><use href="#columns" /></svg></button>
            <button class="end" aria-label="Settings"><svg><use href="#doclist" /></svg></button>
          </div>
          <div class="search">
            <svg class="fun"><use href="#funnel" /></svg>
            <div class="field"><input v-model="studyFilter" type="text" aria-label="Filter studies" /><button aria-label="Clear">×</button></div>
            <button class="drop" aria-label="Filter options"><svg class="caret"><use href="#caret" /></svg></button>
            <button class="addf" aria-label="Add filter"><svg><use href="#add" /></svg></button>
          </div>
          <div class="tree studies">
            <div v-for="(r, i) in studies" :key="i" class="row">
              <span class="gut"><svg v-if="r.status"><use :href="'#' + r.status" /></svg></span>
              <span v-for="(c, j) in r.guides" :key="j" class="cell" :class="guideClass[c]" />
              <svg class="ico"><use :href="r.icon === 'psdg' ? '#psdg-s' : '#' + r.icon" /></svg>
              <span class="txt">{{ r.label }}</span>
            </div>
          </div>
        </div>

        <div class="lower">
          <div class="tools">
            <button class="t18" aria-label="Tree menu"><svg class="caret big-caret"><use href="#caret" /></svg></button>
            <button class="t16" aria-label="Model"><svg><use href="#cube" /></svg></button>
            <i class="dots" />
            <button class="t31" aria-label="Expand all"><svg><use href="#expand" /></svg></button>
            <button class="t17" aria-label="Collapse all"><svg><use href="#collapse" /></svg></button>
            <button class="pressed" aria-label="Show columns"><svg><use href="#eyecols" /></svg></button>
            <i class="sep" />
            <button class="t28" aria-label="Tree filters"><svg><use href="#treefilter" /></svg></button>
            <button class="t22" aria-label="Column settings"><svg><use href="#columns" /></svg></button>
            <i class="sep tight" />
            <button class="t28" aria-label="Layers"><svg><use href="#layers" /></svg></button>
            <button class="t22" aria-label="Pick"><svg><use href="#pick" /></svg></button>
            <button class="end" aria-label="Settings"><svg><use href="#doclist" /></svg></button>
          </div>
          <div class="search">
            <svg class="fun"><use href="#funnel" /></svg>
            <div class="field"><input v-model="partFilter" type="text" aria-label="Filter model" /><button aria-label="Clear">×</button></div>
            <button class="drop" aria-label="Filter options"><svg class="caret"><use href="#caret" /></svg></button>
            <button class="addf" aria-label="Add filter"><svg><use href="#add" /></svg></button>
          </div>
          <div class="thead">
            <span class="c1" />
            <span class="c2"><svg><use href="#rep" /></svg>Master Rep</span>
            <span class="c3">M</span>
          </div>
          <div class="tbody">
            <div class="tree parts">
              <div v-for="(r, i) in parts" :key="i" class="row" :class="{ root: i === 0 }">
                <span v-for="(c, j) in r.guides" :key="j" class="cell" :class="guideClass[c]" />
                <svg class="ico"><use :href="'#' + r.icon" /></svg>
                <svg v-if="r.status" class="mini"><use href="#warn" /></svg>
                <span class="txt">{{ r.label }}</span>
              </div>
            </div>
            <div class="blank" />
            <div class="vbar">
              <button aria-label="Scroll up"><svg class="caret up"><use href="#caret" /></svg></button>
              <i class="thumb" />
              <button class="bot" aria-label="Scroll down"><svg class="caret"><use href="#caret" /></svg></button>
            </div>
          </div>
          <div class="hbars">
            <div class="hbar a">
              <button aria-label="Scroll left"><svg class="caret left"><use href="#caret" /></svg></button>
              <i class="thumb" />
              <button class="bot" aria-label="Scroll right"><svg class="caret right"><use href="#caret" /></svg></button>
            </div>
            <div class="hbar b">
              <button aria-label="Scroll left"><svg class="caret left"><use href="#caret" /></svg></button>
              <i class="thumb" />
              <button class="bot" aria-label="Scroll right"><svg class="caret right"><use href="#caret" /></svg></button>
            </div>
          </div>
        </div>
      </aside>

      <section class="canvas">
        <svg class="model" viewBox="317 162 1603 881" preserveAspectRatio="xMidYMid meet">
          <!-- heat sink base plate -->
          <path d="M473 608L478 598L900 560H1300L1362 600V740L1350 770Q1356 800 1437 838L1428 846L495 642Q512 634 513 624Q510 612 473 608Z" fill="#c0d2da" />
          <path d="M473 608v4l30 7" fill="none" stroke="#7d8d94" />
          <path d="M1350 760Q1360 810 1437 838L1470 820V700H1360Z" fill="#bfd1d8" />
          <path d="M495 642L1428 846L1437 838V841L1428 850L495 645Z" fill="#d5e0e3" stroke="#8a979c" stroke-width=".800" />
          <path d="M473 608Q510 612 513 624Q512 634 495 642" fill="none" stroke="#7a86d0" stroke-width=".800" />
          <path d="M1290 663L1362 600H1400V760L1350 743L1219 712Z" fill="#d3e3ea" />
          <path d="M1242 699L1353 723M1219 714L1349 743M525 618L791 677" fill="none" stroke="#8c9ca3" stroke-width=".800" />
          <g transform="translate(430 480) scale(.4209 .3333)" stroke-width=".800">
            <path d="M110 340H215Q225 400 255 415L580 470L860 530L858 590L232 418L232 400Z" fill="#d2e2ea" />
            <path d="M205 340Q232 350 235 385Q240 415 262 418L490 483Q560 495 580 455L500 425L240 350Z" fill="#a8b8b0" stroke="#5b686a" vector-effect="non-scaling-stroke" />
            <path d="M243 360L500 430L490 463L268 402Q240 385 243 360Z" fill="#95a298" />
            <path d="M262 396L490 462Q540 466 572 446M262 396V418M490 462v20M243 362q-4 30 20 36" fill="none" stroke="#4d68c8" vector-effect="non-scaling-stroke" />
            <ellipse cx="515" cy="432" rx="36" ry="18" fill="#a5abb8" stroke="#2f6fe0" vector-effect="non-scaling-stroke" stroke-width="1.500" />
            <path d="M490 450l10 12h35l10-12" fill="none" stroke="#1f6cf0" vector-effect="non-scaling-stroke" stroke-width="2" />
            <path d="M600 455L850 524L858 590L912 538" fill="#cfdde2" stroke="#7d86c8" vector-effect="non-scaling-stroke" />
          </g>

          <!-- heat pipes -->
          <g transform="translate(1080 480) scale(.3827 .3333)">
            <path d="M780 330L1040 390L1500 510V560L1450 610L1040 720L720 730L705 560Z" fill="#cfdfe6" opacity=".7" />
            <path d="M705 395L1000 440L1250 468L1500 530L1495 583L1380 570L612 478Z" fill="#c2bb74" />
            <path d="M612 485L1000 530L1440 587L1397 628L575 518Z" fill="#c4b05a" />
            <path d="M575 518L1400 628L1397 670L1080 630L530 560Z" fill="#c9c07c" />
            <path d="M1440 587L1442 632L1397 670V628Z" fill="#94802e" stroke="#3b5fd0" vector-effect="non-scaling-stroke" />
            <path d="M1492 535h10v40l-10 8z" fill="#94802e" />
            <path d="M705 395L1000 440L1250 468L1500 530M665 433L1000 472L1490 545M612 478L1490 583M612 486L1440 587M575 520L1400 628" fill="none" stroke="#3f5fb8" stroke-width=".800" vector-effect="non-scaling-stroke" />
            <path d="M530 560L1080 630L1397 670" fill="none" stroke="#4a4a30" stroke-dasharray="3 2" vector-effect="non-scaling-stroke" />
          </g>

          <!-- cooling fins -->
          <g transform="translate(1080 480) scale(.3827 .3333)">
            <path d="M708 490L780 620L1260 570L1265 720L1040 860L830 760L860 670L708 730Z" fill="#7a9a99" opacity=".45" />
            <path d="M1500 580L1265 770L1060 960L1040 900L1260 700L1400 668Z" fill="#b8ccd4" opacity=".6" stroke="#8a979c" vector-effect="non-scaling-stroke" stroke-width=".800" />
            <path d="M875 660Q720 690 701 830Q720 990 932 1075L950 1050Q750 970 745 840Q750 720 865 670Z" fill="#d4e5ec" />
            <g v-for="(f, k) in lowerFins" :key="'l' + k" stroke-width=".800">
              <path :d="f.face" fill="#5f98a6" fill-opacity=".26" stroke="#5a7a84" stroke-opacity=".5" vector-effect="non-scaling-stroke" />
              <path :d="f.edge" fill="#87a4ac" fill-opacity=".6" stroke="#5f7379" stroke-opacity=".7" vector-effect="non-scaling-stroke" />
              <path :d="f.foot" fill="#c9d8de" fill-opacity=".7" stroke="#7d8d92" vector-effect="non-scaling-stroke" />
            </g>
            <path d="M748 845Q760 720 865 672Q800 740 790 850Q800 930 850 1000Q755 930 748 845ZM833 845Q840 760 900 700Q880 780 878 850Q885 930 930 990Q840 930 833 845Z" fill="#c9dfe6" fill-opacity=".3" />
            <g v-for="(f, k) in upperFins" :key="'u' + k" stroke-width=".800">
              <path :d="f.face" fill="#4b6770" fill-opacity=".3" stroke="#5f737a" stroke-opacity=".6" vector-effect="non-scaling-stroke" />
              <path :d="f.edge" fill="#a9bfc6" fill-opacity=".55" stroke="#63777d" stroke-opacity=".8" vector-effect="non-scaling-stroke" />
              <path :d="f.rim" fill="none" stroke="#a9bcc0" stroke-opacity=".8" vector-effect="non-scaling-stroke" />
            </g>
            <path d="M770 325L1025 388V410L780 375Z" fill="#8fa6ae" fill-opacity=".5" stroke="#74868d" stroke-width=".800" vector-effect="non-scaling-stroke" />
            <path d="M708 740Q690 830 720 900Q770 1010 932 1075M748 850Q760 970 950 1050M790 850Q800 960 1000 1030M833 845Q850 930 1030 1000" fill="none" stroke="#5e70e8" stroke-width=".800" vector-effect="non-scaling-stroke" />
            <path d="M932 1076V1030L955 1010V1052M975 1035V992L1000 972V1010" fill="#9fb4bb" fill-opacity=".6" stroke="#66787e" stroke-width=".800" vector-effect="non-scaling-stroke" />
          </g>

          <!-- circuit board -->
          <path d="M444 569L1185 732L1187 740L444 579Z" fill="#0c7a08" />
          <path d="M1185 732L1440 530V540L1187 740Z" fill="#08441a" />
          <path d="M697 368L1440 530L1185 732L444 569Z" fill="#118804" />
          <path d="M697 368L1440 530V540L1187 740L444 579V569ZM444 570L1185 732L1440 531M1185 732l2 8" fill="none" stroke="#1767dc" stroke-width="1.500" />
          <ellipse v-for="(h, i) in holes" :key="i" :cx="h[0]" :cy="h[1]" :rx="h[2]" :ry="h[3]" fill="#a2a9bc" stroke="#1767dc" stroke-width="1.500" />

          <g transform="translate(430 480) scale(.4209 .3333)">
            <g v-for="c in chips" :key="c" :transform="c" stroke="#2b2a10" stroke-width="1">
              <path d="M588 350L654 365V396L588 382Z" fill="#dcc81c" vector-effect="non-scaling-stroke" />
              <path d="M654 365L713 310V338L654 396Z" fill="#a3930e" vector-effect="non-scaling-stroke" />
              <path d="M588 350L648 292L713 310L654 365Z" fill="#d8cb14" vector-effect="non-scaling-stroke" />
              <path d="M592 348L656 362M648 296L710 312" stroke="#f2f0d8" stroke-width="1" vector-effect="non-scaling-stroke" />
              <path d="M596 342L660 356M644 299L706 316" fill="none" vector-effect="non-scaling-stroke" />
              <path d="M588 384L654 398L713 340" fill="none" stroke="#3f8fd0" vector-effect="non-scaling-stroke" />
            </g>
          </g>

          <!-- constraint and load markers -->
          <g fill="#32095c">
            <ellipse cx="453" cy="560" rx="4" ry="4" />
            <circle v-for="(a, i) in anchors" :key="i" :cx="a[0]" :cy="a[1]" r="4" />
            <path d="M463 580l14 4 10 12-4 6-10-8z" />
            <path v-for="(a, i) in bottomCones" :key="'c' + i" :d="`M${a[0]} ${a[1] - 9}l5 9q-5 3-9 0z`" />
          </g>
          <g v-for="(l, i) in loads" :key="i" :transform="`translate(${l[0]} ${l[1]})`">
            <ellipse cy="-7" rx="18" ry="9" fill="#1f6fd8" />
            <ellipse cy="-8" rx="15" ry="7" fill="#2c8a1c" />
            <path v-for="(b, n) in backBars" :key="n" :d="`M${b[0]} ${b[1]}V${b[2]}`" stroke="#e8960c" stroke-width="4" />
            <ellipse cy="-15" rx="17" ry="5" fill="none" stroke="#32095c" stroke-width="5" stroke-dasharray="6 3" />
            <path v-for="(b, n) in backCones" :key="'p' + n" :d="`M${b[0] - 3} ${b[1] - 4}h7l-3 9z`" fill="#32095c" />
            <path v-for="(b, n) in frontBars" :key="'f' + n" :d="`M${b[0]} ${b[1]}V${b[2]}`" stroke="#ee9d14" stroke-width="3" />
            <ellipse cy="-9" rx="17" ry="6" fill="none" stroke="#e8960c" stroke-width="3" stroke-dasharray="4 2" />
            <path v-for="(b, n) in cones" :key="'o' + n" :d="`M${b[0] - 3} ${b[1] - 8}h7l-3 9z`" fill="#e8920a" stroke="#8a4c04" stroke-width=".500" />
            <path d="M-14 -15h4v4h-4zM-5 -11h5v4h-5zM6 -12h4v4h-4zM12 -15h4v3h-4z" fill="#32095c" />
          </g>

          <path d="M643 295v16l4-4 3 6 2-1-3-6h5z" fill="#fff" stroke="#222" />
        </svg>

        <div class="vtools">
          <button v-for="v in viewTools" :key="v.icon" :class="{ on: v.on }" :aria-label="v.name">
            <svg><use :href="'#' + v.icon" /></svg><i v-if="v.more" />
          </button>
        </div>

        <div class="axes">
          <svg viewBox="0 0 115 124">
            <g fill="none" stroke="#54477c" stroke-width="1">
              <path d="M24 49L36 39L59 44L46 54ZM24 49V72L46 77V54M46 77L59 67V44M36 39V62L59 67M24 72L36 62" />
              <path d="M36 39L51 27M46 54L79 61M24 72V106" />
            </g>
            <g fill="#5a4a86" font-family="Open Sans, sans-serif" font-size="11">
              <text x="51" y="28">Z</text><text x="77" y="66">X</text><text x="21" y="112">Y</text>
            </g>
          </svg>
        </div>
      </section>
    </main>

    <footer class="status">
      <button class="sb on" aria-label="Toggle navigator"><svg><use href="#navigator" /></svg></button>
      <button class="sb" aria-label="Browser"><svg><use href="#globe" /></svg></button>
      <button class="sb" aria-label="Full screen"><svg><use href="#pane" /></svg></button>
      <i class="bar" />
      <p><b />13:31 Current tool is paused. Select objects, or Resume to exit Pause mode.</p>
      <i class="bar" />
      <i class="bar g27" />
      <button class="flag" aria-label="Notifications"><svg><use href="#flag" /></svg><span>3</span></button>
      <i class="bar" />
      <i class="bar g3" />
      <button class="find" aria-label="Find"><svg class="bin"><use href="#binoc" /></svg><svg class="caret"><use href="#caret" /></svg></button>
      <i class="bar" />
      <div class="combo">
        <select v-model="selection" aria-label="Selection filter"><option>Geometry and Simulation Objects</option></select>
        <span><svg class="caret"><use href="#caret" /></svg></span>
      </div>
    </footer>
  </div>
</template>

<style>
body { margin: 0; background: #f8faf9; }
</style>

<style scoped>
.sprite { position: absolute; width: 0; height: 0; }
.app { box-sizing: border-box; min-height: 100vh; display: flex; flex-direction: column; border-left: 1px solid #4a4d50; font: 11px/16px "Open Sans", "Noto Sans", sans-serif; color: #55585a; overflow: hidden; }
.app *, .app *::before, .app *::after { box-sizing: border-box; }
button { border: 0; padding: 0; margin: 0; background: none; font: inherit; color: inherit; display: flex; align-items: center; justify-content: center; flex: none; }
svg { display: block; flex: none; }
i { font-style: normal; }
.caret { width: 7px; height: 5px; color: #5b5e60; }
.corner { position: absolute; top: 3px; right: 3px; width: 5px; height: 5px; background: #1f8fe0; clip-path: polygon(0 0, 100% 0, 100% 100%); }

.titlebar { height: 25px; display: flex; align-items: center; background: #dbdfe0; border-top: 1px solid #f0f1f1; padding-left: 7px; }
.logo { width: 16px; height: 16px; }
.brand { width: 56px; padding-left: 4px; font: 600 17px/20px "Lato", sans-serif; color: #54585b; }
.brand i { font-size: 7px; vertical-align: 7px; }
.qa { position: relative; height: 24px; }
.qa svg:not(.caret) { width: 16px; height: 16px; }
.qa .corner { right: -2px; }
.w24 { width: 25px; }
.w12 { width: 12px; }
.dim .caret { color: #a9acae; }
.flip { transform: scaleX(-1); }
.more { border-left: 1px solid #b7bbbc; height: 24px; }
.more .caret { width: 9px; height: 6px; }
.doc { position: relative; width: 300px; height: 21px; margin-left: 3px; display: flex; align-items: center; gap: 6px; padding: 0 2px 0 3px; background: #f1f1f1; font-size: 12px; }
.doc svg { width: 19px; height: 16px; }
.doc button { margin-left: auto; font-weight: 700; font-size: 12px; color: #333; }
.doc .corner { top: 0; right: 0; }
.wins { margin-left: auto; display: flex; padding-right: 2px; }
.wins button { width: 26px; }
.wins svg { width: 12px; height: 12px; fill: none; stroke: #b3b6b7; stroke-width: 1px; }

.tabbar { height: 28px; display: flex; background: #3f4448; color: #e4e6e7; font-size: 13px; line-height: 18px; }
.file { width: 60px; background: linear-gradient(135deg, #6acb4e, #3f9c28); color: #e9f5e4; }
.active { width: 149px; background: #f9fafc; color: #4d8a35; }
.tab { padding: 0 23px; }
.tabtools { margin-left: auto; display: flex; }
.tabtools button { width: 23px; }
.tabtools svg { width: 12px; height: 12px; }
.tabtools .narrow { width: 15px; }
.tabtools .narrow .caret { width: 7px; height: 5px; color: #fff; }
.tabtools .help { font-weight: 700; }

.ribbon { position: relative; height: 109px; display: flex; background: #f8f9fb; border-bottom: 1px solid #c9cccd; }
.group { display: flex; flex-direction: column; border-right: 1px solid #cfd2d4; margin: 2px 0; }
.items { display: flex; height: 86px; }
.item { position: relative; flex-direction: column; justify-content: flex-start; padding-top: 5px; align-items: center; }
.item .corner { top: 1px; }
.item.split { border-left: 1px solid #cfd2d4; height: 82px; }
.big { width: 32px; height: 32px; margin-bottom: 8px; }
.ln { display: flex; align-items: center; gap: 3px; height: 16px; white-space: nowrap; }
.glabel { display: flex; justify-content: center; align-items: center; gap: 4px; }
.clip { width: 55px; display: flex; flex-direction: column; padding: 5px 0 0 1px; gap: 11px; color: #a9acae; }
.clip button { justify-content: flex-start; gap: 4px; height: 16px; }
.clip svg { width: 16px; height: 16px; }
.ai { margin: 0 0 0 auto; width: 53px; padding-top: 4px; }
.ai .big { margin-bottom: 3px; }

.body { flex: 1; display: flex; }
.panel { width: 317px; flex: none; display: flex; flex-direction: column; background: #f8faf9; border-right: 2px solid #dadddf; }
.ptabs { height: 25px; display: flex; background: #d9dddf; }
.ptabs button { width: 31px; }
.ptabs .on { background: #f8faf9; }
.ptabs svg { width: 16px; height: 16px; }
.upper { flex: 1; }
.tools { height: 32px; display: flex; align-items: center; padding: 0 5px 0 9px; }
.tools svg { width: 16px; height: 16px; }
.tools .big-caret { width: 9px; height: 7px; }
.t16 { width: 16px; }
.t17 { width: 17px; }
.t18 { width: 18px; }
.t22 { width: 22px; }
.t28 { width: 28px; }
.t31 { width: 31px; }
.dots { width: 14px; height: 16px; background: repeating-linear-gradient(#bbb 0 2px, transparent 2px 4px) 6px 0 / 2px 100% no-repeat; }
.sep { width: 1px; height: 24px; background: #ccd0d1; margin: 0 2px 0 4px; }
.sep.wide { margin: 0 0 0 8px; }
.sep.tight { margin: 0 2px; }
.pressed { width: 25px; height: 24px; margin-left: 4px; background: #dadcdd; border: 1px solid #b4b7b8; }
.end { width: 24px; margin-left: auto; }
.search { height: 27px; display: flex; align-items: center; padding-left: 11px; }
.fun { width: 16px; height: 16px; }
.field { width: 238px; height: 27px; margin-left: 3px; display: flex; border: 1px solid #c0c3c4; background: #fff; }
.field input { flex: 1; min-width: 0; border: 0; outline: 0; background: none; font: inherit; padding: 0 6px; }
.field button { width: 18px; font-size: 15px; color: #999; }
.drop { width: 17px; }
.addf { width: 22px; }
.addf svg { width: 16px; height: 16px; }

.tree { display: grid; grid-auto-rows: 1fr; font-size: 10px; line-height: 16px; color: #505355; }
.studies { height: 352px; margin-top: 2px; }
.row { display: flex; align-items: center; min-height: 0; }
.gut { width: 42px; padding-left: 18px; flex: none; }
.gut svg { width: 13px; height: 13px; }
.cell { position: relative; width: 20px; height: 100%; flex: none; }
.ico { width: 16px; height: 16px; margin: 0 4px 0 2px; }
.txt { white-space: nowrap; }
.line::before, .tee::before, .elbow::before { content: ""; position: absolute; left: 10px; top: 0; bottom: 0; border-left: 1px solid #cfd1d2; }
.elbow::before { bottom: 50%; }
.tee::after, .elbow::after { content: ""; position: absolute; left: 10px; right: 1px; top: 50%; border-top: 1px solid #cfd1d2; }
.open::after, .shut::after { content: ""; position: absolute; background: #606365; left: 7px; top: 6px; width: 7px; height: 5px; clip-path: polygon(0 0, 100% 0, 50% 100%); }
.shut::after { left: 8px; top: 5px; width: 5px; height: 7px; clip-path: polygon(0 0, 100% 50%, 0 100%); }
.shut::before { content: ""; position: absolute; left: 10px; top: 0; bottom: 0; width: 1px; background: linear-gradient(#cfd1d2 0 4px, transparent 4px 14px, #cfd1d2 14px); }

.lower { border-top: 1px solid #cfd2d3; padding: 0 0 5px; }
.thead { height: 21px; margin: 5px 5px 0 8px; display: flex; border-bottom: 1px solid #d3d5d6; overflow: hidden; }
.thead span { display: flex; align-items: center; border-right: 1px solid #d6d8d9; white-space: nowrap; color: #454849; }
.thead .c1 { width: 191px; }
.thead .c2 { width: 100px; padding-left: 5px; gap: 1px; }
.thead .c2 svg { width: 15px; height: 15px; }
.thead .c3 { flex: 1; min-width: 0; padding-left: 5px; border: 0; overflow: hidden; }
.tbody { height: 158px; margin: 0 5px 0 8px; display: flex; }
.parts { width: 191px; border-right: 1px solid #dcdedf; }
.parts .ico { margin: 0 5px 0 3px; }
.parts .cell + .ico { margin: 0 4px 0 3px; }
.mini { width: 8px; height: 8px; margin-bottom: 8px; }
.root .txt { padding-left: 1px; }
.blank { flex: 1; }
.vbar { width: 15px; display: flex; flex-direction: column; background: #dddfe0; }
.vbar button, .hbar button { width: 15px; height: 14px; background: #fafbfb; border: 1px solid #d8dadb; }
.vbar .thumb { height: 43px; background: #fbfcfc; border: 1px solid #d0d3d4; }
.bot { margin-top: auto; }
.vbar .caret, .hbar .caret { color: #9ea1a3; }
.up { transform: rotate(180deg); }
.left { transform: rotate(90deg); }
.right { transform: rotate(-90deg); }
.hbars { display: flex; margin-left: 8px; gap: 1px; }
.hbar { display: flex; background: #dddfe0; height: 14px; }
.hbar .bot { margin: 0 0 0 auto; }
.hbar.a { width: 190px; }
.hbar.b { width: 97px; }
.hbar .thumb { width: 137px; background: #fafbfb; border: 1px solid #cdd0d1; }
.hbar.b .thumb { width: 20px; }

.canvas { position: relative; flex: 1; min-width: 0; background: #fff; }
.model { position: absolute; inset: 0; width: 100%; height: 100%; }
.vtools { position: absolute; top: 5px; left: 0; right: 0; margin: 0 auto; width: 440px; height: 31px; padding: 2px; display: flex; background: #f9fafb; border: 1px solid #b9bcbe; }
.vtools button { position: relative; flex: 1; border: 1px solid transparent; }
.vtools .on { background: #d9dbdc; border-color: #c2c4c5; }
.vtools svg { width: 17px; height: 17px; }
.vtools i { position: absolute; right: 1px; bottom: 3px; width: 4px; height: 4px; background: #333; clip-path: polygon(100% 0, 100% 100%, 0 100%); }
.axes { position: absolute; right: 0; bottom: 0; width: 116px; height: 125px; border-left: 1px solid #8c8a94; border-top: 1px solid #6c5a92; background: #fff; }

.status { height: 37px; display: flex; align-items: center; border-top: 1px solid #c3c8c8; background: #f8faf9; padding: 0 16px 0 5px; }
.sb { width: 24px; height: 24px; }
.sb.on { width: 22px; background: #dadcdd; border: 1px solid #b4b7b8; }
.sb svg { width: 16px; height: 16px; }
.bar { width: 1px; height: 30px; background: #cdd1d1; flex: none; }
.sb + .bar { margin-left: 7px; height: 24px; }
.g27 { margin-left: 27px; }
.g3 { margin-left: 3px; }
.status p { position: relative; flex: 1; margin: 0; padding: 0 0 4px 16px; font-size: 10px; white-space: nowrap; }
.status p b { position: absolute; left: 6px; top: 5px; width: 5px; height: 5px; border-radius: 50%; background: #175a8c; }
.flag { width: 73px; padding-left: 6px; justify-content: flex-start; }
.flag svg { width: 12px; height: 16px; }
.flag span { margin: 8px 0 0 -7px; font-size: 10px; }
.find { width: 41px; gap: 8px; }
.bin { width: 17px; height: 17px; }
.combo { width: 174px; height: 23px; margin-left: 94px; display: flex; border: 1px solid #c0c4c5; }
.combo select { width: 157px; border: 0; border-right: 1px solid #c0c4c5; padding: 0 0 0 6px; appearance: none; background: none; font: inherit; color: inherit; overflow: hidden; text-overflow: clip; }
.combo span { flex: 1; display: flex; align-items: center; justify-content: center; }
</style>
